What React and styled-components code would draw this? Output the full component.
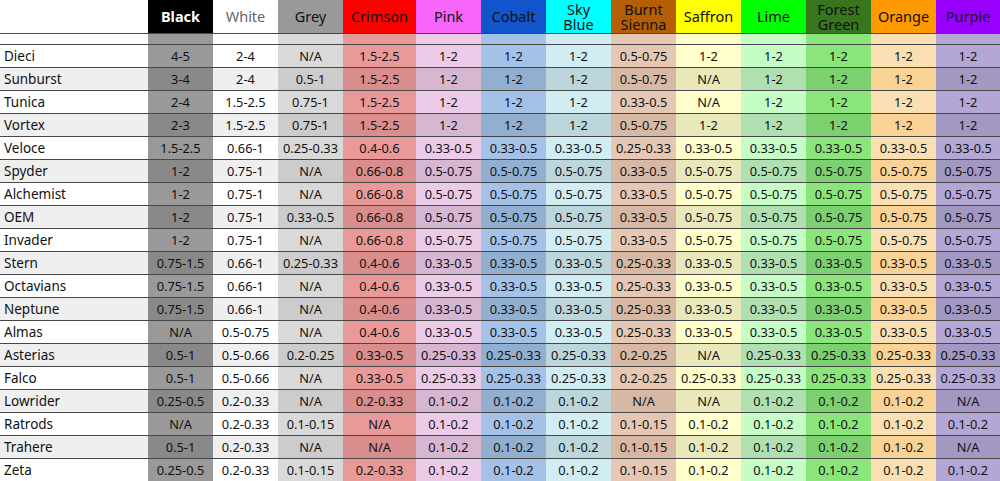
import React from "react";
import styled, { createGlobalStyle } from "styled-components";

const Global = createGlobalStyle`
  html, body { margin: 0; padding: 0; background: #ffffff; }
  body { font-family: "Noto Sans", "DejaVu Sans", sans-serif; }
`;

const COLS = [
  { name: "Black", head: "#000000", fg: "#ffffff", bold: true, light: "#999999", dark: "#898989" },
  { name: "White", head: "#ffffff", fg: "#666666", light: "#ffffff", dark: "#efefef" },
  { name: "Grey", head: "#999999", fg: "#111111", light: "#d9d9d9", dark: "#cccccc" },
  { name: "Crimson", head: "#ff0000", fg: "#111111", light: "#ea9999", dark: "#d98d8d" },
  { name: "Pink", head: "#f766f9", fg: "#111111", light: "#ebcbe8", dark: "#d6b6d1" },
  { name: "Cobalt", head: "#1155cc", fg: "#111111", light: "#a4c2e8", dark: "#92afd0" },
  { name: "Sky\nBlue", head: "#00ffff", fg: "#111111", light: "#d0edf3", dark: "#bcd6dc" },
  { name: "Burnt\nSienna", head: "#b45f06", fg: "#111111", light: "#e6c7b3", dark: "#d6b8a4" },
  { name: "Saffron", head: "#ffff00", fg: "#111111", light: "#ffffcc", dark: "#e8e8bb" },
  { name: "Lime", head: "#00ff00", fg: "#111111", light: "#c6fcc6", dark: "#b0e0b2" },
  { name: "Forest\nGreen", head: "#38761d", fg: "#111111", light: "#8ae67a", dark: "#7dd06f" },
  { name: "Orange", head: "#ff9900", fg: "#111111", light: "#f9dfb1", dark: "#f9d296" },
  { name: "Purple", head: "#9900ff", fg: "#111111", light: "#b4a7d6", dark: "#a398c2" },
];

const x5 = (v) => [v, v, v, v, v];

const ROWS = [
  ["Dieci", ["4-5", "2-4", "N/A", "1.5-2.5", "1-2", "1-2", "1-2", "0.5-0.75", "1-2", "1-2", "1-2", "1-2", "1-2"]],
  ["Sunburst", ["3-4", "2-4", "0.5-1", "1.5-2.5", "1-2", "1-2", "1-2", "0.5-0.75", "N/A", "1-2", "1-2", "1-2", "1-2"]],
  ["Tunica", ["2-4", "1.5-2.5", "0.75-1", "1.5-2.5", "1-2", "1-2", "1-2", "0.33-0.5", "N/A", "1-2", "1-2", "1-2", "1-2"]],
  ["Vortex", ["2-3", "1.5-2.5", "0.75-1", "1.5-2.5", "1-2", "1-2", "1-2", "0.5-0.75", "1-2", "1-2", "1-2", "1-2", "1-2"]],
  ["Veloce", ["1.5-2.5", "0.66-1", "0.25-0.33", "0.4-0.6", "0.33-0.5", "0.33-0.5", "0.33-0.5", "0.25-0.33", ...x5("0.33-0.5")]],
  ["Spyder", ["1-2", "0.75-1", "N/A", "0.66-0.8", "0.5-0.75", "0.5-0.75", "0.5-0.75", "0.33-0.5", ...x5("0.5-0.75")]],
  ["Alchemist", ["1-2", "0.75-1", "N/A", "0.66-0.8", "0.5-0.75", "0.5-0.75", "0.5-0.75", "0.33-0.5", ...x5("0.5-0.75")]],
  ["OEM", ["1-2", "0.75-1", "0.33-0.5", "0.66-0.8", "0.5-0.75", "0.5-0.75", "0.5-0.75", "0.33-0.5", ...x5("0.5-0.75")]],
  ["Invader", ["1-2", "0.75-1", "N/A", "0.66-0.8", "0.5-0.75", "0.5-0.75", "0.5-0.75", "0.33-0.5", ...x5("0.5-0.75")]],
  ["Stern", ["0.75-1.5", "0.66-1", "0.25-0.33", "0.4-0.6", "0.33-0.5", "0.33-0.5", "0.33-0.5", "0.25-0.33", ...x5("0.33-0.5")]],
  ["Octavians", ["0.75-1.5", "0.66-1", "N/A", "0.4-0.6", "0.33-0.5", "0.33-0.5", "0.33-0.5", "0.25-0.33", ...x5("0.33-0.5")]],
  ["Neptune", ["0.75-1.5", "0.66-1", "N/A", "0.4-0.6", "0.33-0.5", "0.33-0.5", "0.33-0.5", "0.25-0.33", ...x5("0.33-0.5")]],
  ["Almas", ["N/A", "0.5-0.75", "N/A", "0.4-0.6", "0.33-0.5", "0.33-0.5", "0.33-0.5", "0.25-0.33", ...x5("0.33-0.5")]],
  ["Asterias", ["0.5-1", "0.5-0.66", "0.2-0.25", "0.33-0.5", "0.25-0.33", "0.25-0.33", "0.25-0.33", "0.2-0.25", "N/A", "0.25-0.33", "0.25-0.33", "0.25-0.33", "0.25-0.33"]],
  ["Falco", ["0.5-1", "0.5-0.66", "N/A", "0.33-0.5", "0.25-0.33", "0.25-0.33", "0.25-0.33", "0.2-0.25", ...x5("0.25-0.33")]],
  ["Lowrider", ["0.25-0.5", "0.2-0.33", "N/A", "0.2-0.33", "0.1-0.2", "0.1-0.2", "0.1-0.2", "N/A", "N/A", "0.1-0.2", "0.1-0.2", "0.1-0.2", "N/A"]],
  ["Ratrods", ["N/A", "0.2-0.33", "0.1-0.15", "N/A", "0.1-0.2", "0.1-0.2", "0.1-0.2", "0.1-0.15", ...x5("0.1-0.2")]],
  ["Trahere", ["0.5-1", "0.2-0.33", "N/A", "N/A", "0.1-0.2", "0.1-0.2", "0.1-0.2", "0.1-0.15", "0.1-0.2", "0.1-0.2", "0.1-0.2", "0.1-0.2", "N/A"]],
  ["Zeta", ["0.25-0.5", "0.2-0.33", "0.1-0.15", "0.2-0.33", "0.1-0.2", "0.1-0.2", "0.1-0.2", "0.1-0.15", ...x5("0.1-0.2")]],
];

const Sheet = styled.div`
  width: 1000px;
  display: flex;
  flex-direction: column;
  color: #111111;
`;

const Row = styled.div`
  display: grid;
  grid-template-columns: 148px repeat(3, 65px) 73px repeat(8, 65px) 64px;
  height: ${(p) => p.$h}px;
  border-bottom: 1px solid #474747;
`;

const HeadCell = styled.div`
  display: flex;
  align-items: center;
  justify-content: center;
  text-align: center;
  white-space: pre-line;
  background: ${(p) => p.$bg};
  color: ${(p) => p.$fg};
  font-weight: ${(p) => (p.$bold ? 700 : 400)};
  font-size: 14.5px;
  line-height: 15px;
  padding: 0 2px;
`;

const NameCell = styled.div`
  display: flex;
  align-items: center;
  padding-left: 4px;
  background: ${(p) => (p.$alt ? "#efefef" : "#ffffff")};
  font-size: 13.5px;
`;

const Cell = styled.div`
  display: flex;
  align-items: center;
  justify-content: center;
  background: ${(p) => p.$bg};
  font-size: 12.8px;
  white-space: nowrap;
`;

export default function App() {
  return (
    <>
      <Global />
      <Sheet>
        <Row $h={33}>
          <HeadCell $bg="#ffffff" $fg="#111111" />
          {COLS.map((c) => (
            <HeadCell key={c.name} $bg={c.head} $fg={c.fg} $bold={c.bold}>
              {c.name}
            </HeadCell>
          ))}
        </Row>
        <Row $h={10}>
          <NameCell />
          {COLS.map((c) => (
            <Cell key={c.name} $bg={c.light} />
          ))}
        </Row>
        {ROWS.map(([name, vals], i) => {
          const alt = i % 2 === 1;
          return (
            <Row key={name} $h={22}>
              <NameCell $alt={alt}>{name}</NameCell>
              {vals.map((v, j) => (
                <Cell key={j} $bg={alt ? COLS[j].dark : COLS[j].light}>
                  {v}
                </Cell>
              ))}
            </Row>
          );
        })}
      </Sheet>
    </>
  );
}
